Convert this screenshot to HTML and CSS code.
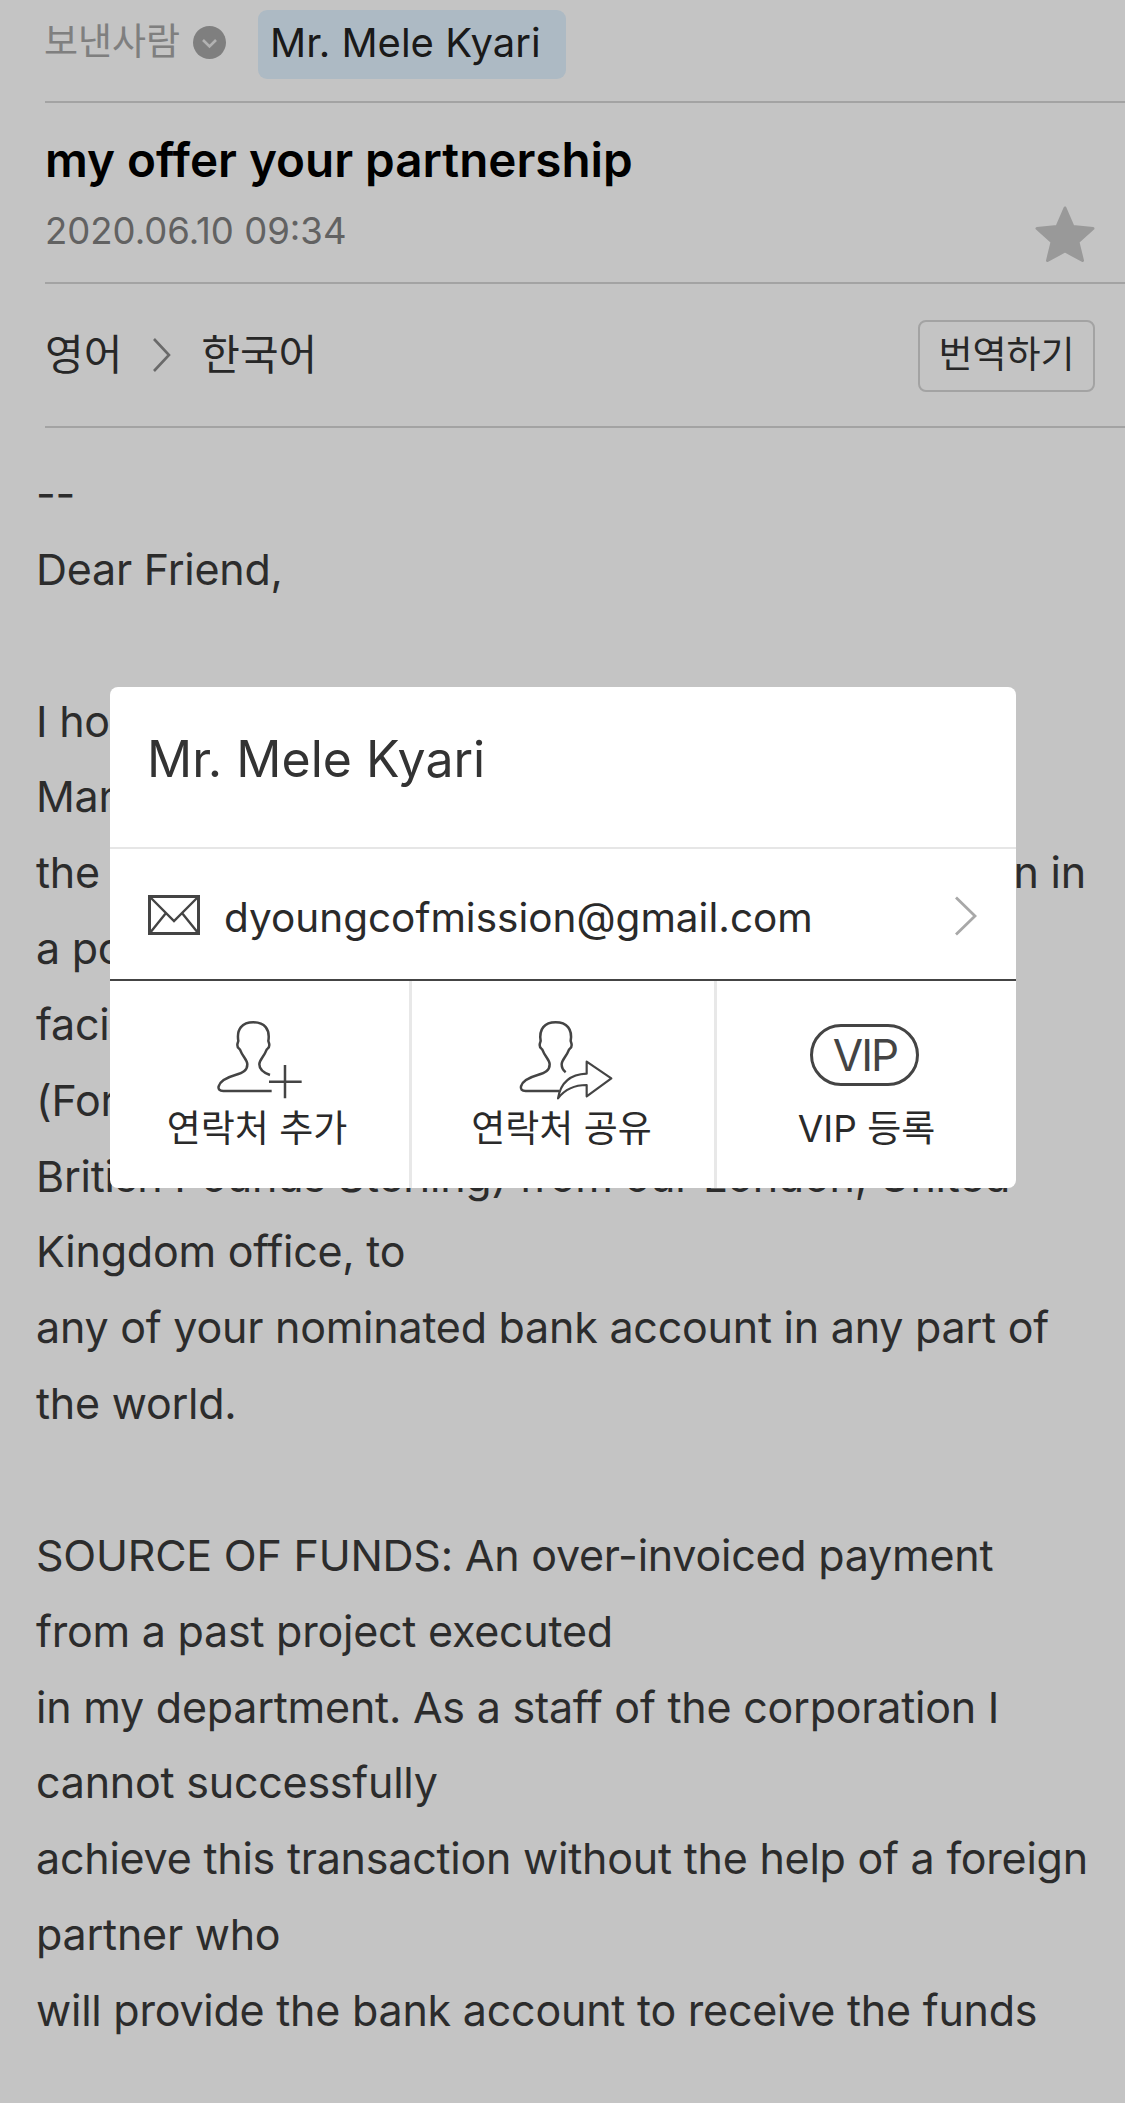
FILE: index.html
```html
<!DOCTYPE html>
<html lang="ko">
<head>
<meta charset="utf-8">
<title>my offer your partnership</title>
<link rel="stylesheet" href="styles.css">
</head>
<body>
<main class="mail">
  <header class="head">
    <div class="sender-row rule">
      <span class="sender-label">보낸사람</span>
      <svg class="sender-toggle" viewBox="0 0 33 33"><circle cx="16.5" cy="16.5" r="16.5" fill="#a6a6a6"/><path d="M10 14l6.500 6.500L23 14" fill="none" stroke="#e8e8e8" stroke-width="2.600"/></svg>
      <span class="chip">Mr. Mele Kyari</span>
    </div>
    <div class="subject-row rule">
      <div>
        <h1 class="subject">my offer your partnership</h1>
        <div class="date">2020.06.10 09:34</div>
      </div>
      <svg class="star" viewBox="0 0 60 56"><path d="M30 2l8 18.500 20 2-15 13.500 4.500 18.500L30 45 12.500 54.500 17 36 2 22.500l20-2z" fill="#c8c8c8" stroke="#c8c8c8" stroke-width="3" stroke-linejoin="round"/></svg>
    </div>
    <div class="translate-row rule">
      <span class="lang">영어</span>
      <svg class="lang-arrow" viewBox="0 0 20 36"><path d="M2 2l15 16L2 34" fill="none" stroke="#8a8a8a" stroke-width="2.600"/></svg>
      <span class="lang">한국어</span>
      <span class="translate-btn">번역하기</span>
    </div>
  </header>
  <article class="body-text">
    <p>--</p>
    <p>Dear Friend,</p>
    <p>&nbsp;</p>
    <p>I hope this message finds you well. I am the</p>
    <p>Manager of the Nigerian National Petroleum,</p>
    <p>the corporation, and I write to you, on this mission in</p>
    <p>a position to transfer the sum and offer you</p>
    <p>facilitation of the contract funds of GBP</p>
    <p>(Forty Five Million, Five Hundred Thousand</p>
    <p>British Pounds Sterling) from our London, United</p>
    <p>Kingdom office, to</p>
    <p>any of your nominated bank account in any part of</p>
    <p>the world.</p>
    <p>&nbsp;</p>
    <p>SOURCE OF FUNDS: An over-invoiced payment</p>
    <p>from a past project executed</p>
    <p>in my department. As a staff of the corporation I</p>
    <p>cannot successfully</p>
    <p>achieve this transaction without the help of a foreign</p>
    <p>partner who</p>
    <p>will provide the bank account to receive the funds</p>
  </article>
</main>
<div class="overlay"></div>
<section class="modal">
  <div class="modal-name">Mr. Mele Kyari</div>
  <div class="modal-mail">
    <svg class="env" viewBox="0 0 52 40"><rect x="1.500" y="1.500" width="49" height="37" fill="none" stroke="#444" stroke-width="3"/><path d="M1.500 1.500L26 26 50.500 1.500M1.500 38.500L18 18M50.500 38.500L34 18" fill="none" stroke="#444" stroke-width="2.400"/></svg>
    <span class="addr">dyoungcofmission@gmail.com</span>
    <svg class="mail-chevron" viewBox="0 0 24 40"><path d="M2 1.500L21 20 2 38.500" fill="none" stroke="#a8a8a8" stroke-width="2.800"/></svg>
  </div>
  <div class="actions">
    <div class="action">
      <svg class="action-icon" viewBox="350 1015 265 240"><path d="M520 1228H375c-12 0-16-6-14-14 4-16 22-26 50-34 24-7 36-14 36-32 0-14-14-22-22-44-2-4-8-4-8-14 0-6 2-8 3-12-6-36 12-56 45-56s51 20 45 56c1 4 3 6 3 12 0 10-6 10-8 14-8 22-22 30-22 44 0 14 14 26 32 32" fill="none" stroke="#444" stroke-width="7.500"/><path d="M560 1150v100M512 1200h98" fill="none" stroke="#444" stroke-width="7.500"/></svg>
      <span class="action-label">연락처 추가</span>
    </div>
    <div class="action">
      <svg class="action-icon share" viewBox="1255 1015 285 240"><path d="M1375 1228h-100c-12 0-16-6-14-14 4-16 22-26 50-34 24-7 36-14 36-32 0-14-14-22-22-44-2-4-8-4-8-14 0-6 2-8 3-12-6-36 12-56 45-56s51 20 45 56c1 4 3 6 3 12 0 10-6 10-8 14-8 22-22 30-22 44 0 10 4 18 12 24" fill="none" stroke="#444" stroke-width="7.500"/><path d="M1372 1250c8-48 40-72 86-74v-36l74 50-74 54v-34c-36 0-66 14-86 40z" fill="#fff" stroke="#444" stroke-width="6.500" stroke-linejoin="round"/></svg>
      <span class="action-label">연락처 공유</span>
    </div>
    <div class="action">
      <span class="vip-badge">VIP</span>
      <span class="action-label">VIP 등록</span>
    </div>
  </div>
</section>
</body>
</html>
```
FILE: styles.css
```css
* { box-sizing: border-box; }
html, body { margin: 0; padding: 0; }
body {
  width: 1125px;
  height: 2103px;
  overflow: hidden;
  background: #fff;
  position: relative;
  font-family: Inter, "Noto Sans CJK KR", sans-serif;
  color: #333;
}
.head { padding-left: 45px; }
.rule { border-bottom: 2px solid #d4d4d4; }
.sender-row {
  height: 103px;
  display: flex;
  align-items: flex-start;
  padding-top: 10px;
}
.sender-label {
  font-size: 37px;
  line-height: 52px;
  margin: 6px 0 0 -1px;
  color: #a6a6a6;
  width: 134px;
  white-space: nowrap;
}
.sender-toggle { width: 33px; height: 33px; margin: 16px 0 0 15px; }
.chip {
  margin-left: 32px;
  height: 69px;
  width: 308px;
  background: #e2f3ff;
  border-radius: 9px;
  padding-left: 12px;
  font-size: 40px;
  line-height: 66px;
  color: #222;
  white-space: nowrap;
}
.subject-row {
  height: 181px;
  display: flex;
  justify-content: space-between;
  padding-right: 30px;
}
.subject {
  margin: 0;
  padding-top: 26px;
  font-size: 47.600px;
  line-height: 62px;
  font-weight: 600;
  color: #000;
  white-space: nowrap;
}
.date {
  font-size: 36.500px;
  line-height: 44px;
  margin-top: 18px;
  color: #808080;
  white-space: nowrap;
}
.star { width: 60px; height: 56px; margin-top: 103px; }
.translate-row {
  height: 144px;
  display: flex;
  align-items: center;
  padding-right: 30px;
}
.lang { font-size: 42px; line-height: 56px; color: #333; white-space: nowrap; }
.lang-arrow { width: 20px; height: 36px; margin: 0 29px 0 30px; }
.translate-btn {
  margin-left: auto;
  margin-top: 2px;
  width: 177px;
  height: 72px;
  border: 2px solid #d4d4d4;
  border-radius: 8px;
  font-size: 37px;
  line-height: 66px;
  text-align: center;
  color: #333;
  white-space: nowrap;
}
.body-text {
  padding: 28px 0 0 36px;
  font-size: 43px;
  letter-spacing: -0.235px;
  line-height: 75.850px;
  color: #3a3a3a;
}
.body-text p { margin: 0; white-space: nowrap; }
.overlay {
  position: absolute;
  inset: 0;
  background: rgba(0, 0, 0, 0.23);
}
.modal {
  position: absolute;
  left: 110px;
  top: 687px;
  width: 906px;
  height: 501px;
  background: #fff;
  border-radius: 8px;
  overflow: hidden;
  display: flex;
  flex-direction: column;
}
.modal-name {
  height: 162px;
  flex: none;
  padding: 41px 0 0 37px;
  font-size: 50px;
  line-height: 62px;
  color: #333;
  border-bottom: 2px solid #e6e6e6;
  white-space: nowrap;
}
.modal-mail {
  height: 132px;
  flex: none;
  display: flex;
  align-items: center;
  padding: 8px 38px 0 38px;
  border-bottom: 2px solid #444;
}
.env { width: 52px; height: 40px; flex: none; margin-bottom: 6px; }
.addr { margin-left: 24px; font-size: 40.500px; line-height: 56px; color: #2a2a2a; white-space: nowrap; }
.mail-chevron { width: 24px; height: 40px; margin-left: auto; margin-bottom: 4px; flex: none; }
.actions { flex: 1; display: flex; }
.action {
  display: flex;
  flex-direction: column;
  align-items: center;
  padding-top: 39px;
}
.action:nth-child(1) { width: 299px; }
.action:nth-child(2) { width: 305px; }
.action:nth-child(3) { flex: 1; }
.action + .action { border-left: 3px solid #e8e8e8; }
.action-icon { height: 80px; width: auto; }
.action-icon.share { margin-left: 7px; }
.vip-badge {
  width: 109px;
  height: 62px;
  margin: 4px 5px 14px 0;
  padding-left: 2px;
  border: 3px solid #444;
  border-radius: 31px;
  font-size: 44px;
  line-height: 56px;
  letter-spacing: -2px;
  text-align: center;
  color: #444;
}
.action-label { font-size: 37px; line-height: 50px; margin-top: 4px; color: #2a2a2a; white-space: nowrap; }
.action:nth-child(1) .action-label { margin-right: 5px; }
.action:nth-child(2) .action-label { margin-right: 3px; }
```
